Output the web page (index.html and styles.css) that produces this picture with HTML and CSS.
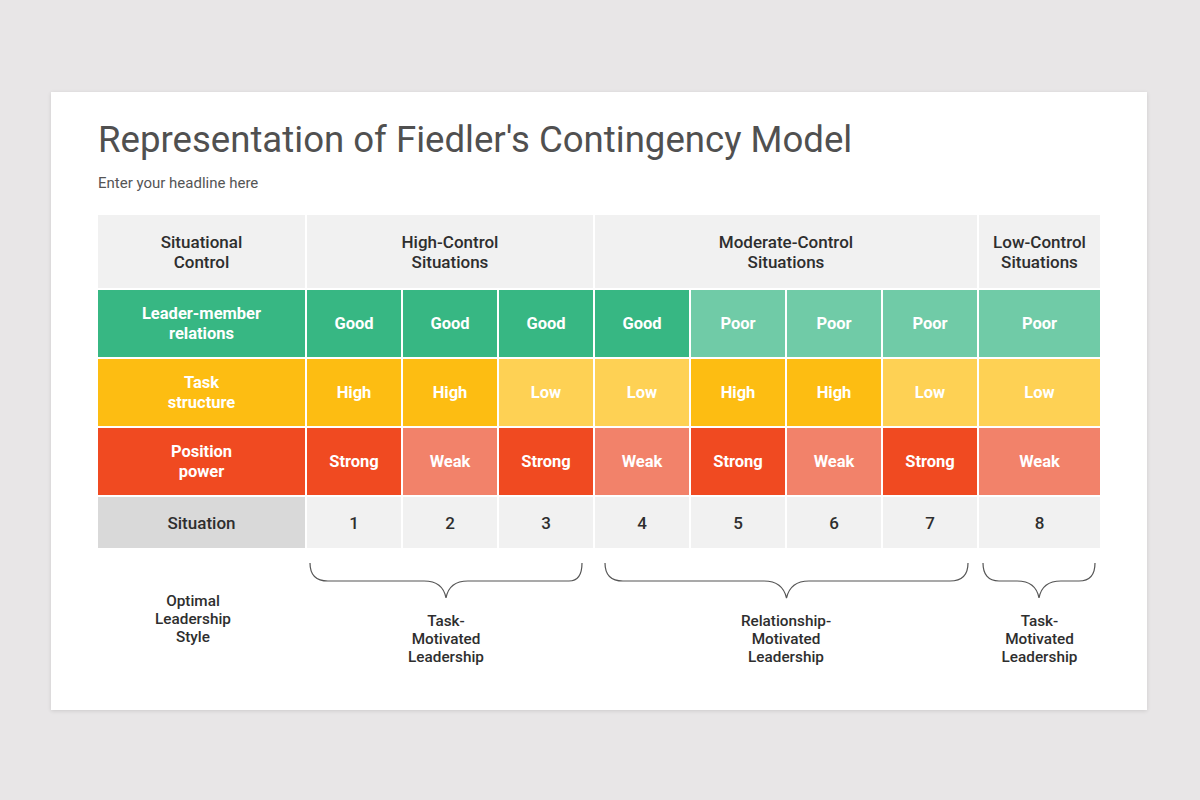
FILE: index.html
```html
<!DOCTYPE html>
<html lang="en">
<head>
  <meta charset="UTF-8">
  <title>Fiedler's Contingency Model</title>
  <link rel="stylesheet" href="styles.css">
</head>
<body>
  <div class="slide">
    <h1>Representation of Fiedler's Contingency Model</h1>
    <p class="subtitle">Enter your headline here</p>

    <div class="table">
      <!-- header row -->
      <div class="cell head">Situational<br>Control</div>
      <div class="cell head span3">High-Control<br>Situations</div>
      <div class="cell head span4">Moderate-Control<br>Situations</div>
      <div class="cell head">Low-Control<br>Situations</div>

      <!-- leader-member relations -->
      <div class="cell label green">Leader-member<br>relations</div>
      <div class="cell green">Good</div>
      <div class="cell green">Good</div>
      <div class="cell green">Good</div>
      <div class="cell green">Good</div>
      <div class="cell green-light">Poor</div>
      <div class="cell green-light">Poor</div>
      <div class="cell green-light">Poor</div>
      <div class="cell green-light">Poor</div>

      <!-- task structure -->
      <div class="cell label yellow">Task<br>structure</div>
      <div class="cell yellow">High</div>
      <div class="cell yellow">High</div>
      <div class="cell yellow-light">Low</div>
      <div class="cell yellow-light">Low</div>
      <div class="cell yellow">High</div>
      <div class="cell yellow">High</div>
      <div class="cell yellow-light">Low</div>
      <div class="cell yellow-light">Low</div>

      <!-- position power -->
      <div class="cell label red">Position<br>power</div>
      <div class="cell red">Strong</div>
      <div class="cell red-light">Weak</div>
      <div class="cell red">Strong</div>
      <div class="cell red-light">Weak</div>
      <div class="cell red">Strong</div>
      <div class="cell red-light">Weak</div>
      <div class="cell red">Strong</div>
      <div class="cell red-light">Weak</div>

      <!-- situation numbers -->
      <div class="cell situation">Situation</div>
      <div class="cell num">1</div>
      <div class="cell num">2</div>
      <div class="cell num">3</div>
      <div class="cell num">4</div>
      <div class="cell num">5</div>
      <div class="cell num">6</div>
      <div class="cell num">7</div>
      <div class="cell num">8</div>
    </div>

    <div class="styles">
      <div class="style-label">Optimal<br>Leadership<br>Style</div>

      <div class="group span3">
        <svg class="brace" width="286" height="38" viewBox="0 0 286 38">
          <path d="M3,0 C3,12 9,18 21,18 L117,18 C130,18 137,24 139,35 C141,24 148,18 161,18 L262,18 C270,18 275,12 275,0"/>
        </svg>
        <div class="style-name left-shift">Task-<br>Motivated<br>Leadership</div>
      </div>

      <div class="group span4">
        <svg class="brace" width="382" height="38" viewBox="0 0 382 38">
          <path d="M10,0 C10,12 16,18 28,18 L169,18 C182,18 189,24 191.5,35 C194,24 201,18 214,18 L355,18 C367,18 373,12 373,0"/>
        </svg>
        <div class="style-name">Relationship-<br>Motivated<br>Leadership</div>
      </div>

      <div class="group">
        <svg class="brace" width="121" height="38" viewBox="0 0 121 38">
          <path d="M4,0 C4,11 9,18 20,18 L38,18 C51,18 58,24 60,35 C62,24 69,18 82,18 L100,18 C111,18 116,11 116,0"/>
        </svg>
        <div class="style-name">Task-<br>Motivated<br>Leadership</div>
      </div>
    </div>
  </div>
</body>
</html>
```

FILE: styles.css
```css
body {
  margin: 0;
  padding: 92px 53px 90px 51px;
  background-color: #e8e6e7;
  font-family: Roboto, "Liberation Sans", sans-serif;
}

.slide {
  width: 1096px;
  height: 618px;
  box-sizing: border-box;
  padding: 26px 47px 0 47px;
  background-color: #fff;
  box-shadow: 0 1px 4px rgba(0, 0, 0, 0.12);
}

h1 {
  margin: 0;
  font-size: 36.6px;
  font-weight: 400;
  line-height: 44px;
  color: #505050;
}

.subtitle {
  margin: 11px 0 0 0;
  font-size: 15px;
  line-height: 20px;
  color: #555;
}

.table {
  display: grid;
  grid-template-columns: 207px repeat(7, 94px) 121px;
  grid-template-rows: 73px 67px 67px 67px 51px;
  gap: 2px;
  margin-top: 22px;
  width: 1002px;
}

.cell {
  display: flex;
  align-items: center;
  justify-content: center;
  text-align: center;
  font-size: 16.5px;
  font-weight: 700;
  line-height: 20px;
  color: #fff;
}

.span3 {
  grid-column: span 3;
}

.span4 {
  grid-column: span 4;
}

.head {
  background-color: #f1f1f1;
  color: #2e2e2e;
  font-size: 17px;
  font-weight: 500;
}

.green {
  background-color: #37b783;
}

.green-light {
  background-color: #70cba7;
}

.yellow {
  background-color: #fdbd12;
}

.yellow-light {
  background-color: #fed154;
}

.red {
  background-color: #f04a21;
}

.red-light {
  background-color: #f2826a;
}

.situation {
  background-color: #d9d9d9;
  color: #2e2e2e;
  font-size: 17px;
  font-weight: 500;
}

.num {
  background-color: #f1f1f1;
  color: #2e2e2e;
  font-size: 17px;
  font-weight: 500;
}

.styles {
  display: grid;
  grid-template-columns: 207px repeat(7, 94px) 121px;
  column-gap: 2px;
  margin-top: 15px;
  width: 1002px;
}

.style-label {
  padding: 29px 17px 0 0;
  text-align: center;
  font-size: 15.3px;
  font-weight: 500;
  line-height: 18px;
  color: #2e2e2e;
}

.group {
  display: flex;
  flex-direction: column;
  align-items: center;
}

.brace {
  display: block;
}

.brace path {
  fill: none;
  stroke: #555;
  stroke-width: 1.2;
}

.style-name {
  margin-top: 11px;
  text-align: center;
  font-size: 15.3px;
  font-weight: 500;
  line-height: 18px;
  color: #2e2e2e;
}

.left-shift {
  margin-right: 8px;
}
```
